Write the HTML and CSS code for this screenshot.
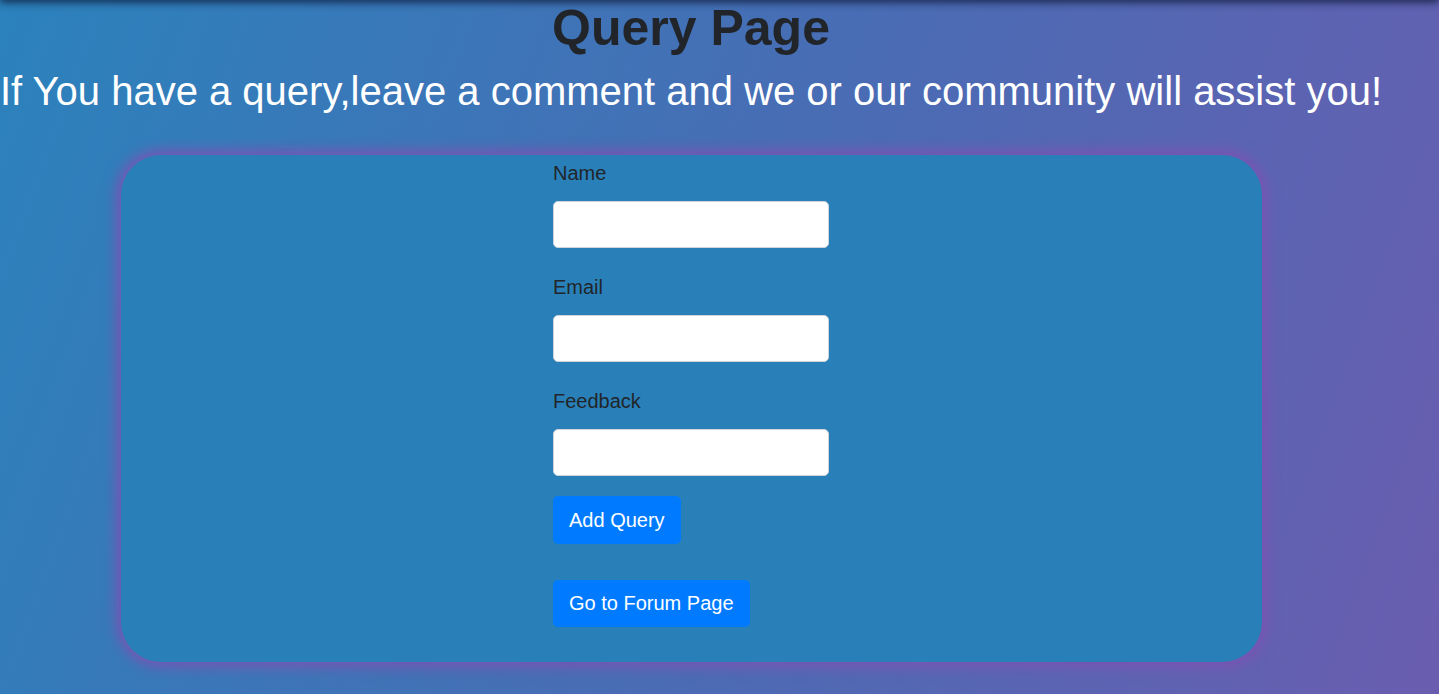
FILE: index.html
```html
<!DOCTYPE html>
<html lang="en">
<head>
<meta charset="utf-8">
<title>Query Page</title>
<link rel="stylesheet" href="styles.css">
</head>
<body>
<div class="topshadow"></div>
<div class="page">
  <h1 class="title">Query Page</h1>
  <h2 class="subtitle">If You have a query,leave a comment and we or our community will assist you!</h2>
  <div class="card">
    <form class="form">
      <div class="group">
        <label class="label" for="name">Name</label>
        <input class="input" id="name" type="text">
      </div>
      <div class="group">
        <label class="label" for="email">Email</label>
        <input class="input" id="email" type="email">
      </div>
      <div class="group last">
        <label class="label" for="feedback">Feedback</label>
        <input class="input" id="feedback" type="text">
      </div>
      <button class="btn" type="button">Add Query</button>
      <button class="btn second" type="button">Go to Forum Page</button>
    </form>
  </div>
</div>
</body>
</html>
```

FILE: styles.css
```css
html, body {
  margin: 0;
  padding: 0;
  height: 100%;
}
body {
  font-family: "Liberation Sans", Arial, sans-serif;
  background: linear-gradient(110deg, #2b82bc 0%, #4b6bb4 55%, #6a5db0 100%);
  overflow: hidden;
  position: relative;
}
.topshadow {
  position: absolute;
  left: 0;
  right: 0;
  top: -10px;
  height: 10px;
  box-shadow: 0 2px 8px rgba(10, 20, 50, 0.85);
}
.page {
  width: 1382px;
  display: flex;
  flex-direction: column;
  align-items: center;
}
.title {
  margin: 0;
  margin-top: 2px;
  font-size: 50px;
  line-height: 52px;
  font-weight: bold;
  color: #212529;
}
.subtitle {
  margin: 0;
  margin-top: 14px;
  font-size: 40px;
  line-height: 46px;
  font-weight: normal;
  color: #ffffff;
  white-space: nowrap;
}
.card {
  margin-top: 41px;
  width: 1141px;
  box-sizing: border-box;
  background: #2980b9;
  border-radius: 40px;
  box-shadow: 0 0 14px 4px #7d52b3;
  padding: 3px 0 35px;
  display: flex;
  justify-content: center;
}
.form {
  width: 276px;
  display: flex;
  flex-direction: column;
  align-items: flex-start;
}
.group {
  display: flex;
  flex-direction: column;
  width: 100%;
  margin-bottom: 24px;
}
.group.last {
  margin-bottom: 20px;
}
.label {
  font-size: 20px;
  line-height: 30px;
  color: #212529;
  margin-bottom: 13px;
}
.input {
  box-sizing: border-box;
  width: 276px;
  height: 47px;
  border: 1px solid #ced4da;
  border-radius: 5px;
  background: #fff;
  margin: 0;
}
.btn {
  font-family: "Liberation Sans", Arial, sans-serif;
  font-size: 20px;
  line-height: 24px;
  color: #fff;
  background: #007bff;
  border: none;
  border-radius: 5px;
  padding: 12px 16px;
  margin: 0;
}
.btn.second {
  margin-top: 36px;
  padding: 11px 16px 12px;
}
```
